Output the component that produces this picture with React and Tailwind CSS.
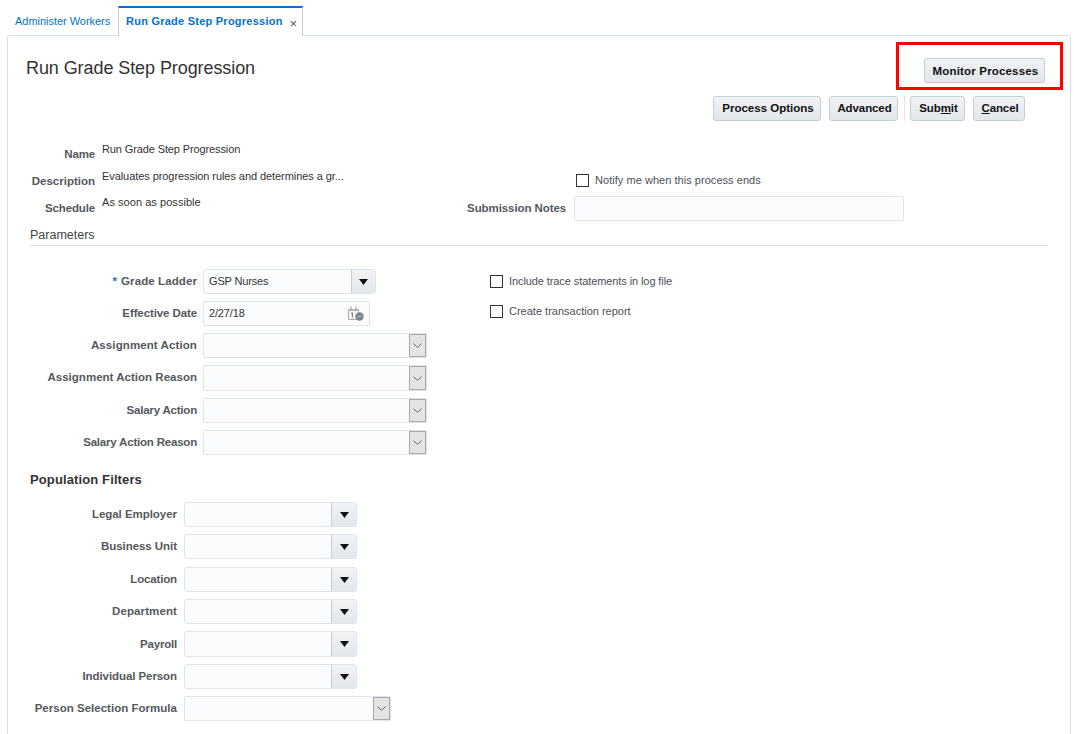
const Caret = () => (
  <svg width="9" height="6" viewBox="0 0 9 6"><path d="M0 0h9L4.5 6z" fill="#111" /></svg>
);
const Chevron = () => (
  <svg width="9" height="5" viewBox="0 0 9 5" fill="none"><path d="M0.5 0.5L4.5 4.5L8.5 0.5" stroke="#666" strokeWidth="1" /></svg>
);
const Calendar = () => (
  <svg width="16" height="15" viewBox="0 0 16 15" fill="none">
    <path d="M0.5 3.5h10v10h-10z" fill="#f5f6f7" stroke="#a4aaae" />
    <path d="M1 3h9v2H1z" fill="#b4b9bd" />
    <path d="M3 0.5v3M8 0.5v3" stroke="#8b9196" />
    <path d="M3 7.5l1.4-.8v5" stroke="#6f767b" />
    <circle cx="11.5" cy="10.5" r="4.2" fill="#7d8489" />
    <path d="M9.6 10.8c1-1 2.6.6 3.8-.6" stroke="#d5d9dc" />
  </svg>
);

const Btn = ({ children, pt = "pt-px", className = "" }) => (
  <button className={`h-[25px] ${pt} pl-[2px] rounded-[3px] border border-[#c4ced7] bg-gradient-to-b from-[#f1f3f5] to-[#e3e7ea] text-[11.5px] font-bold text-[#111] flex items-center justify-center ${className}`}>
    {children}
  </button>
);

const Label = ({ children, className = "tracking-[0.1px]" }) => (
  <span className={`text-[11.5px] font-bold text-[#55585c] text-right shrink-0 ${className}`}>{children}</span>
);

const Field = ({ className = "", children }) => (
  <div className={`h-[25px] rounded-[2px] border border-[#dfe4ea] bg-[#fbfcfe] flex items-center ${className}`}>{children}</div>
);

const ComboField = ({ w, h = "h-[25px]", btn = "w-[25px]", value }) => (
  <div className={`${h} ${w} rounded-[3px] border border-[#dfe4ea] bg-[#fbfcfe] flex items-stretch overflow-hidden`}>
    <span className="flex-1 pl-[5px] text-[11px] tracking-[-0.15px] text-[#333] leading-[23px]">{value}</span>
    <span className={`${btn} border-l border-[#c4ced7] bg-gradient-to-b from-[#f1f3f5] to-[#e3e7ea] flex items-center justify-center`}><Caret /></span>
  </div>
);

const ChoiceField = ({ w, h = "h-[25px]" }) => (
  <div className={`${h} ${w} rounded-[2px] border border-[#dfe4ea] bg-[#fbfcfe] flex justify-end`}>
    <span className="w-[17px] border border-[#a8a8a8] bg-[#e4e4e4] flex items-center justify-center"><Chevron /></span>
  </div>
);

const Check = ({ label, className }) => (
  <div className="flex items-center gap-[6px] h-[13px]">
    <span className="w-[13px] h-[13px] border border-[#333] bg-white shrink-0" />
    <span className={`text-[11px] text-[#4d4f57] whitespace-nowrap ${className}`}>{label}</span>
  </div>
);

const InfoRow = ({ label, labelClass, value, valueClass = "" }) => (
  <div className="flex h-[27px] items-start">
    <Label className={`w-[87px] pt-[5px] leading-[16px] ${labelClass}`}>{label}</Label>
    <span className={`ml-[7px] text-[11px] leading-[16px] text-[#333] whitespace-nowrap ${valueClass}`}>{value}</span>
  </div>
);

const params = [
  { label: "Assignment Action", mt: "mt-[7px]", t: "tracking-[0.1px]", h: "h-[25px]" },
  { label: "Assignment Action Reason", mt: "mt-[7px]", t: "tracking-[0.02px]", h: "h-[26px]" },
  { label: "Salary Action", mt: "mt-[7px]", t: "tracking-[-0.2px]", h: "h-[25px]" },
  { label: "Salary Action Reason", mt: "mt-[7px]", t: "tracking-[-0.2px]", h: "h-[25px]" },
];

const filters = [
  { label: "Legal Employer", mt: "mt-0", t: "tracking-[-0.04px]", h: "h-[25px]" },
  { label: "Business Unit", mt: "mt-[7px]", t: "tracking-[-0.05px]", h: "h-[25px]" },
  { label: "Location", mt: "mt-[8px]", t: "tracking-[-0.15px]", h: "h-[25px]" },
  { label: "Department", mt: "mt-[7px]", t: "tracking-[0.1px]", h: "h-[25px]" },
  { label: "Payroll", mt: "mt-[7px]", t: "tracking-[-0.2px] pt-px", h: "h-[26px]" },
  { label: "Individual Person", mt: "mt-[7px]", t: "tracking-[-0.08px]", h: "h-[25px]" },
];

export default function App() {
  return (
    <div className="relative w-[1074px] h-[734px] overflow-hidden bg-white" style={{ fontFamily: '"Liberation Sans", Arial, sans-serif' }}>
      <div className="h-[35px] pl-[7px] flex items-end">
        <div className="w-[111px] h-[29px] pl-[8px] text-[11px] leading-[31px] tracking-[-0.03px] text-[#0572ce]">Administer Workers</div>
        <div className="relative z-10 w-[185px] h-[30px] -mb-px border-x border-[#c4ced7] border-t-2 border-t-[#0572ce] bg-white flex items-center pl-[7px]">
          <span className="-mt-[2px] text-[11px] font-bold tracking-[0.24px] text-[#0572ce] whitespace-nowrap">Run Grade Step Progression</span>
          <span className="ml-[7px] mt-[3px] text-[13px] leading-none text-[#555]">×</span>
        </div>
      </div>

      <div className="ml-[7px] w-[1064px] h-[720px] rounded-t-[3px] border border-[#d6dfe6] bg-white">
        <div className="flex justify-between items-start pt-[22px] pl-[18px] pr-[25px]">
          <h1 className="text-[18px] leading-[20px] tracking-[-0.08px] text-[#333]">Run Grade Step Progression</h1>
          <Btn pt="pt-[2px]" className="w-[121px] tracking-[0.17px]">Monitor Processes</Btn>
        </div>

        <div className="mt-[13px] pr-[45px] flex justify-end items-center">
          <Btn className="w-[108px]">Process Options</Btn>
          <Btn className="w-[69px] ml-[8px] tracking-[-0.1px]">Advanced</Btn>
          <span className="w-px h-[25px] bg-[#dfe4ea] ml-[6px] mr-[5px]" />
          <Btn className="w-[55px] tracking-[-0.1px]"><span>Sub<u>m</u>it</span></Btn>
          <Btn className="w-[52px] ml-[8px] tracking-[-0.1px]"><span><u>C</u>ancel</span></Btn>
        </div>

        <div className="mt-[20px] flex">
          <div className="w-[400px] shrink-0">
            <InfoRow label="Name" labelClass="tracking-[-0.15px]" value="Run Grade Step Progression" valueClass="tracking-[-0.12px]" />
            <InfoRow label="Description" labelClass="tracking-[0px]" value="Evaluates progression rules and determines a gr..." valueClass="tracking-[-0.07px]" />
            <InfoRow label="Schedule" labelClass="tracking-[-0.15px]" value="As soon as possible" valueClass="-mt-px tracking-[0.05px]" />
          </div>
          <div className="pt-[33px]">
            <div className="ml-[168px]"><Check label="Notify me when this process ends" className="tracking-[0.04px]" /></div>
            <div className="mt-[9px] flex items-center">
              <Label className="w-[158px] tracking-[-0.09px]">Submission Notes</Label>
              <Field className="ml-[8px] w-[330px]" />
            </div>
          </div>
        </div>

        <div className="mx-[22px] mt-[4px] h-[20px] border-b border-[#d6dfe6] text-[12.5px] leading-[18px] text-[#444]">Parameters</div>

        <div className="mt-[23px] flex">
          <div className="w-[482px] shrink-0">
            <div className="flex items-center">
              <Label className="w-[189px] tracking-[0.1px]"><span className="text-[#0572ce] mr-[4px]">*</span>Grade Ladder</Label>
              <div className="ml-[6px]"><ComboField w="w-[173px]" btn="w-[24px]" value="GSP Nurses" /></div>
            </div>
            <div className="mt-[7px] flex items-center">
              <Label className="w-[189px] tracking-[-0.1px]">Effective Date</Label>
              <Field className="ml-[6px] w-[167px] pl-[5px] pr-[5px] justify-between">
                <span className="text-[11px] tracking-[-0.15px] text-[#333]">2/27/18</span>
                <Calendar />
              </Field>
            </div>
            {params.map((p) => (
              <div key={p.label} className={`${p.mt} flex items-center`}>
                <Label className={`w-[189px] ${p.t}`}>{p.label}</Label>
                <div className="ml-[6px]"><ChoiceField w="w-[224px]" h={p.h} /></div>
              </div>
            ))}
          </div>
          <div className="pt-[6px] flex flex-col gap-[17px]">
            <Check label="Include trace statements in log file" className="tracking-[-0.09px]" />
            <Check label="Create transaction report" className="tracking-[0px]" />
          </div>
        </div>

        <h2 className="ml-[22px] mt-[17px] h-[16px] text-[13px] leading-[16px] tracking-[0.12px] font-bold text-[#333]">Population Filters</h2>

        <div className="mt-[14px]">
          {filters.map((f) => (
            <div key={f.label} className={`${f.mt} flex items-center`}>
              <Label className={`w-[169px] ${f.t}`}>{f.label}</Label>
              <div className="ml-[7px]"><ComboField w="w-[173px]" h={f.h} value="" /></div>
            </div>
          ))}
          <div className="mt-[7px] flex items-center">
            <Label className="w-[169px] tracking-[0.02px]">Person Selection Formula</Label>
            <div className="ml-[7px]"><ChoiceField w="w-[207px]" /></div>
          </div>
        </div>
      </div>

      <div className="absolute left-[896px] top-[42px] w-[167px] h-[48px] border-[3px] border-[#ff0000] pointer-events-none" />
    </div>
  );
}
